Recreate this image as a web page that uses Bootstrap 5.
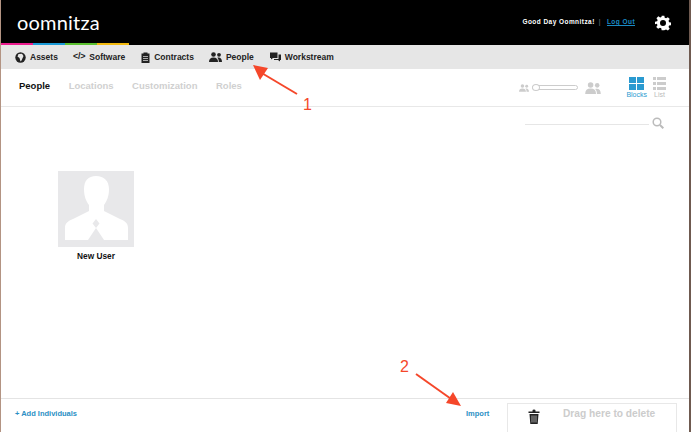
<!DOCTYPE html>
<html lang="en"><head><meta charset="utf-8"><title>Oomnitza</title>
<link rel="stylesheet" href="https://cdn.jsdelivr.net/npm/bootstrap@5.3.0/dist/css/bootstrap.min.css">
<style>
html,body{height:100%;overflow:hidden}
body{font-family:"Liberation Sans",Arial,sans-serif;background:#fff;color:#111}
.app-frame{height:432px;border-left:1px solid #b39483;border-right:2px solid #6f5a50;position:relative}
.top-bar{height:45px;background:#000;padding-left:16px;padding-right:18px;position:relative}
.brand-word{font-family:"Lato","Liberation Sans",sans-serif;font-size:20px;color:#fff;letter-spacing:.2px;font-weight:400;line-height:1;margin-top:-2px}
.greet{font-size:6.5px;font-weight:700;color:#fff;letter-spacing:.45px;margin-right:20px;margin-top:-1px;white-space:nowrap}
.greet a{color:#1a8ac4;margin-left:2px}
.greet .sep{color:#888;margin:0 4px;font-weight:400}
.strip{position:absolute;left:0;bottom:0;display:flex;height:2px}
.strip i{width:32px;display:block}
.bg-pink-a{background:#ec1c8e}.bg-blue-a{background:#1b9ad6}.bg-green-a{background:#5cc130}.bg-gold-a{background:#f2b90f}
.main-nav{height:24px;background:#e6e6e6;padding-left:14px;font-size:8.5px;font-weight:700;color:#222}
.main-nav span.item{display:flex;align-items:center;gap:4px;white-space:nowrap}
.nav-gap-a{margin-right:15px}
.nav-gap-b{margin-right:16px}
.nav-gap-c{margin-right:16px}
.code-mark{font-size:9px;letter-spacing:-.2px}
.sub-nav{height:38px;border-bottom:1px solid #e8e8e8;padding-left:18px;padding-right:23px}
.tab-row{gap:18.5px;font-size:9.5px;font-weight:700;color:#d0d0d0;margin-bottom:2px}
.tab-row .on{color:#111}
.size-track{width:46px;height:5px;border:1px solid #ccc;border-radius:3px;margin-left:3px;margin-right:7px;position:relative}
.size-track b{position:absolute;left:-1px;top:-2px;width:8px;height:7px;border:1px solid #ccc;border-radius:50%;background:#fff}
.big-people{margin-right:25px}
.view-opt{font-size:7px;text-align:center;line-height:1;color:#bbb}
.view-opt.on{color:#2a9ad0;margin-right:6px}
.opt-label{margin-top:1px}
.search-row{padding-top:10px;padding-right:25px;height:292px}
.search-line{width:124px;height:1px;background:#e6e6e6;margin-top:7px;margin-right:3px}
.user-tile{position:absolute;left:57px;top:171px;width:76px;text-align:center;font-size:8.3px;font-weight:700;color:#111}
.tile-box{width:76px;height:76px;background:#e8e8ea;margin-bottom:3px;display:block}
.foot-bar{position:absolute;left:0;right:0;top:398px;height:34px;border-top:1px solid #e4e4e4;padding-left:14px;font-size:7.5px;font-weight:700;color:#2a8fc4}
.add-link{padding-top:9px}
.drop-zone{position:absolute;left:506px;top:4px;width:170px;height:30px;border:1px solid #e8e8e8;border-bottom:0;color:#ccc;font-size:10.2px;font-weight:700;padding-left:55px;padding-top:2px}
.drop-zone svg{position:absolute;left:20px;top:5px}
.import-link{position:absolute;left:465px;top:9px}
.notes{position:absolute;left:0;top:0;pointer-events:none}
.notes text{font-family:"Liberation Sans",Arial,sans-serif;font-size:16px;fill:#f5472a}
</style></head>
<body>
<div class="app-frame">
 <div class="top-bar d-flex align-items-center justify-content-between">
  <div class="brand-word">oomnitza</div>
  <div class="d-flex align-items-center">
   <div class="greet">Good Day Oomnitza!<span class="sep">|</span><a href="#">Log Out</a></div>
   <svg width="16" height="16" viewBox="0 0 24 24"><path fill="#fff" fill-rule="evenodd" d="M10 1h4l.6 3.2 2 .8 2.700-1.800 2.800 2.800-1.800 2.700.8 2 3.200.6v4l-3.200.6-.8 2 1.800 2.700-2.800 2.800-2.700-1.800-2 .8L14 23h-4l-.6-3.200-2-.8-2.700 1.800-2.800-2.800 1.800-2.700-.8-2L0 14v-4l3.200-.6.8-2-1.800-2.700L5 1.900l2.700 1.800 2-.8zM12 7.500a4.500 4.500 0 1 0 0 9 4.500 4.500 0 0 0 0-9z"/></svg>
  </div>
  <div class="strip"><i class="bg-pink-a"></i><i class="bg-blue-a"></i><i class="bg-green-a"></i><i class="bg-gold-a"></i></div>
 </div>
 <div class="main-nav d-flex align-items-center">
  <span class="item nav-gap-a"><svg width="11" height="11" viewBox="0 0 11 11"><circle cx="5.500" cy="5.500" r="5.200" fill="#222"/><path fill="#e6e6e6" d="M3.500 2 7 1.700 8.500 4 6.500 8.500 5.500 9.500 4.500 6 2.500 4.500z"/></svg>Assets</span>
  <span class="item nav-gap-b"><span class="code-mark">&lt;/&gt;</span>Software</span>
  <span class="item nav-gap-a"><svg width="9" height="11" viewBox="0 0 9 11"><path fill="#222" d="M.5 1.500h2V.5h4v1h2V11H.5z"/><path stroke="#e6e6e6" stroke-width=".7" d="M2 4.500h5M2 6.500h5M2 8.500h5"/></svg>Contracts</span>
  <span class="item nav-gap-c"><svg width="13" height="10" viewBox="0 0 13 10"><circle cx="4.500" cy="2.500" r="2.300" fill="#222"/><path fill="#222" d="M0 10c0-3 1.500-4.500 4.500-4.500S9 7 9 10z"/><circle cx="10" cy="2.800" r="1.900" fill="#222"/><path fill="#222" d="M9.800 10c0-2-.5-3.300-1.500-4.200 2.800-.8 4.700.8 4.700 4.200z"/></svg>People</span>
  <span class="item"><svg width="11" height="10" viewBox="0 0 11 10"><path fill="#222" d="M0 .5h7.500V6H3L1 7.500V6H0z"/><path fill="#222" d="M8.500 2.500H11V8H10v1.500L8 8H4V7h4.500z"/></svg>Workstream</span>
 </div>
 <div class="sub-nav d-flex align-items-center justify-content-between">
  <div class="tab-row d-flex align-items-center"><span class="on">People</span><span>Locations</span><span>Customization</span><span>Roles</span></div>
  <div class="d-flex align-items-center">
   <svg width="10" height="8" viewBox="0 0 13 10"><circle cx="4.500" cy="2.500" r="2.300" fill="#ccc"/><path fill="#ccc" d="M0 10c0-3 1.500-4.500 4.500-4.500S9 7 9 10z"/><circle cx="10" cy="2.800" r="1.900" fill="#ccc"/><path fill="#ccc" d="M9.800 10c0-2-.5-3.300-1.500-4.200 2.800-.8 4.700.8 4.700 4.200z"/></svg>
   <div class="size-track"><b></b></div>
   <svg class="big-people" width="16" height="12" viewBox="0 0 13 10"><circle cx="4.500" cy="2.500" r="2.300" fill="#ccc"/><path fill="#ccc" d="M0 10c0-3 1.500-4.500 4.500-4.500S9 7 9 10z"/><circle cx="10" cy="2.800" r="1.900" fill="#ccc"/><path fill="#ccc" d="M9.800 10c0-2-.5-3.300-1.500-4.200 2.800-.8 4.700.8 4.700 4.200z"/></svg>
   <div class="view-opt on"><svg width="15" height="13" viewBox="0 0 15 13" class="d-block mx-auto"><path fill="#2a9ad0" d="M0 0h7v6H0zM8 0h7v6H8zM0 7h7v6H0zM8 7h7v6H8z"/></svg><div class="opt-label">Blocks</div></div>
   <div class="view-opt"><svg width="13" height="13" viewBox="0 0 13 13" class="d-block mx-auto"><path fill="#ccc" d="M0 0h3v3H0zM4 0h9v3H4zM0 5h3v3H0zM4 5h9v3H4zM0 10h3v3H0zM4 10h9v3H4z"/></svg><div class="opt-label">List</div></div>
  </div>
 </div>
 <div class="search-row d-flex justify-content-end align-items-start">
  <div class="search-line"></div>
  <svg width="12" height="12" viewBox="0 0 12 12"><circle cx="5" cy="5" r="3.800" fill="none" stroke="#bbb" stroke-width="1.500"/><path stroke="#bbb" stroke-width="2" d="M8 8l3.300 3.300"/></svg>
 </div>
 <div class="user-tile">
  <svg class="tile-box" viewBox="0 0 76 76"><path fill="#fff" d="M38 5c8 0 13 5 13 13 0 7-2 12-5 16v6l16 8c5 2 8 4 8 9v12H46l-8-12-8 12H7V57c0-5 3-7 8-9l16-8v-6c-3-4-5-9-5-16 0-8 4-13 12-13z"/><path fill="#e8e8ea" d="M38 48l3.500 4.500L38 57l-3.500-4.500z"/></svg>
  New User
 </div>
 <div class="foot-bar">
  <div class="add-link">+ Add Individuals</div>
  <span class="import-link">Import</span>
  <div class="drop-zone">Drag here to delete
   <svg width="12" height="15" viewBox="0 0 12 15"><path fill="#222" d="M.5 2.500h4V1.500Q4.500.5 6 .5t1.500 1v1h4V4H.500zM1.500 5h9L9.700 15H2.300z"/><path stroke="#fff" stroke-width=".6" d="M4 6.500v7M6 6.500v7M8 6.500v7"/></svg>
  </div>
 </div>
 <svg class="notes" width="691" height="432" viewBox="0 0 691 432">
  <path stroke="#f5472a" stroke-width="2" d="M296 94 259 72"/><path fill="#f5472a" d="M252 65 267 68 259 80z"/>
  <text x="302" y="110">1</text>
  <path stroke="#f5472a" stroke-width="2" d="M415 374 453 401"/><path fill="#f5472a" d="M460 406 445 403 452 392z"/>
  <text x="399" y="372">2</text>
 </svg>
</div>
</body></html>
